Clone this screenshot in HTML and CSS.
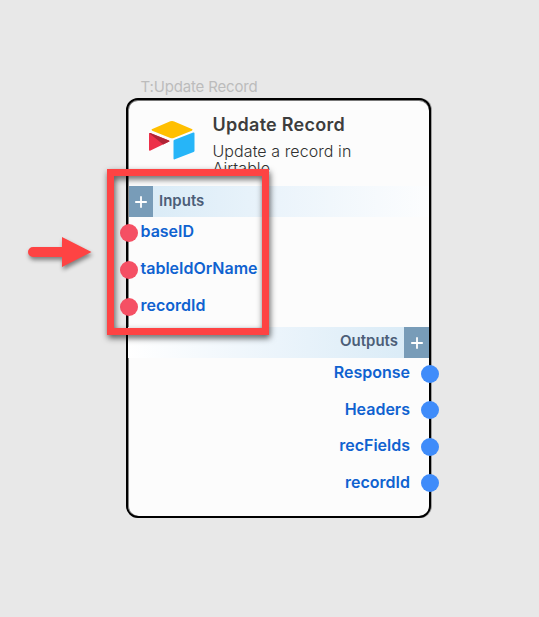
FILE: index.html
```html
<!DOCTYPE html>
<html lang="en">
<head>
<meta charset="utf-8">
<title>Update Record</title>
<link rel="stylesheet" href="styles.css">
</head>
<body>
<main class="canvas">
  <div class="node-label">T:Update Record</div>
  <section class="node">
    <header class="node-header">
      <svg class="logo" width="48" height="40" viewBox="0 0 48 40">
        <path fill="#ffbf00" d="M22.300 1.300 4.300 9.100q-1.800.8 0 1.600l18 7.200q1.700.7 3.500 0L43.800 10.700q1.800-.8 0-1.600L26.200 1.400q-2-.8-3.900-.1Z"/>
        <path fill="#26b5f8" d="M25.500 20.800v17.600q0 1.400 1.300.9l18.800-7.300q.9-.3.9-1.300V13.500q0-1.300-1.300-.9L26.500 19.700q-1 .3-1 1.100Z"/>
        <path fill="#ed3049" d="m21.200 21.600-18.700 9q-1.500.7-1.500-.9V13.900q0-1.300 1.300-.9l18.600 7.500q1.100.5.3 1.100Z"/>
        <path fill="#b02436" d="m21.200 21.600-6 2.900L1.200 13.200q.3-.4 1.100-.2l18.600 7.500q1.100.5.3 1.100Z"/>
      </svg>
      <div class="heading">
        <h1 class="title">Update Record</h1>
        <p class="description">Update a record in Airtable</p>
      </div>
    </header>
    <div class="band inputs">
      <span class="add"><svg width="12" height="12" viewBox="0 0 12 12"><path d="M6 .2v11.6M.2 6h11.6"/></svg></span>
      <span class="band-name">Inputs</span>
    </div>
    <ul class="ports in">
      <li class="port"><i class="dot"></i><span>baseID</span></li>
      <li class="port"><i class="dot"></i><span>tableIdOrName</span></li>
      <li class="port"><i class="dot"></i><span>recordId</span></li>
    </ul>
    <div class="band outputs">
      <span class="band-name">Outputs</span>
      <span class="add"><svg width="12" height="12" viewBox="0 0 12 12"><path d="M6 .2v11.6M.2 6h11.6"/></svg></span>
    </div>
    <ul class="ports out">
      <li class="port"><span>Response</span><i class="dot"></i></li>
      <li class="port"><span>Headers</span><i class="dot"></i></li>
      <li class="port"><span>recFields</span><i class="dot"></i></li>
      <li class="port"><span>recordId</span><i class="dot"></i></li>
    </ul>
  </section>
  <div class="highlight"></div>
  <svg class="arrow" width="80" height="46" viewBox="0 0 80 46">
    <path d="M13 17h29V7l29.500 15L42 37V27H13a5 5 0 0 1 0-10Z"/>
  </svg>
</main>
</body>
</html>
```
FILE: styles.css
```css
* { box-sizing: border-box; }
body { margin: 0; background: #e8e8e8; font-family: Inter, "Liberation Sans", sans-serif; }
.canvas { position: relative; width: 539px; height: 617px; padding: 78px 0 0 126px; overflow: hidden; }
.node-label { height: 20px; padding-left: 14.500px; font-size: 15px; line-height: 18px; letter-spacing: -.16px; color: #bcbcbc; white-space: nowrap; }
.node {
  width: 305px; height: 420px;
  border: 2px solid #000; border-radius: 12px;
  background: #fcfcfc;
  box-shadow: 1px 0 0 #a0a0a0, inset 1px 0 0 #858585, inset 0 1px 0 #777;
}
.node-header { display: flex; height: 86px; padding: 20px 0 0 20px; gap: 16.500px; }
.logo { flex: none; }
.heading { width: 170px; height: 60px; margin-top: -6px; }
.title { margin: 0; font-size: 18px; line-height: 22px; font-weight: 600; letter-spacing: .27px; color: #3d3d3d; white-space: nowrap; }
.description { margin: 7px 0 0; font-size: 16px; line-height: 17px; font-weight: 300; letter-spacing: .08px; color: #303030; }
.band { display: flex; align-items: center; height: 31px; }
.inputs { margin-left: 1px; background: linear-gradient(90deg, #d7eaf6, #ebf4fb 50%, #fcfdfe); }
.outputs { position: relative; top: -.5px; justify-content: flex-end; background: linear-gradient(270deg, #d7eaf6, #ebf4fb 50%, #fff); }
.add { display: flex; align-items: center; justify-content: center; width: 24px; height: 31px; padding-top: 1px; background: #789cb8; }
.outputs .add { width: 25px; }
.add path { stroke: #fff; stroke-width: 1.8; }
.band-name { padding: 0 6px 2px; font-size: 15px; line-height: 18px; font-weight: 600; color: #4c5e78; }
.ports { list-style: none; margin: 0; padding: 0; }
.in { height: 110px; padding-top: 7px; }
.out { padding-top: 7px; }
.port { display: flex; align-items: flex-start; height: 36.660px; font-size: 16px; line-height: 16px; font-weight: 600; color: #0f62d0; }
.port span { margin-top: -1px; }
.in .port { height: 36.800px; }
.dot { flex: none; width: 18px; height: 18px; border-radius: 50%; }
.in .dot { margin: 0 2.500px 0 -8px; background: #f55064; }
.out .port { justify-content: flex-end; }
.out .dot { margin: -.5px -9.500px 0 10.500px; background: #3f8cfa; }
.highlight {
  position: absolute; left: 107px; top: 169px; width: 162px; height: 166px;
  border: 7px solid #fe4343; filter: drop-shadow(1px 3px 3px rgba(0,0,0,.65));
}
.arrow { position: absolute; left: 20px; top: 230px; fill: #fe4343; filter: drop-shadow(1px 3px 2px rgba(0,0,0,.45)); }
```
